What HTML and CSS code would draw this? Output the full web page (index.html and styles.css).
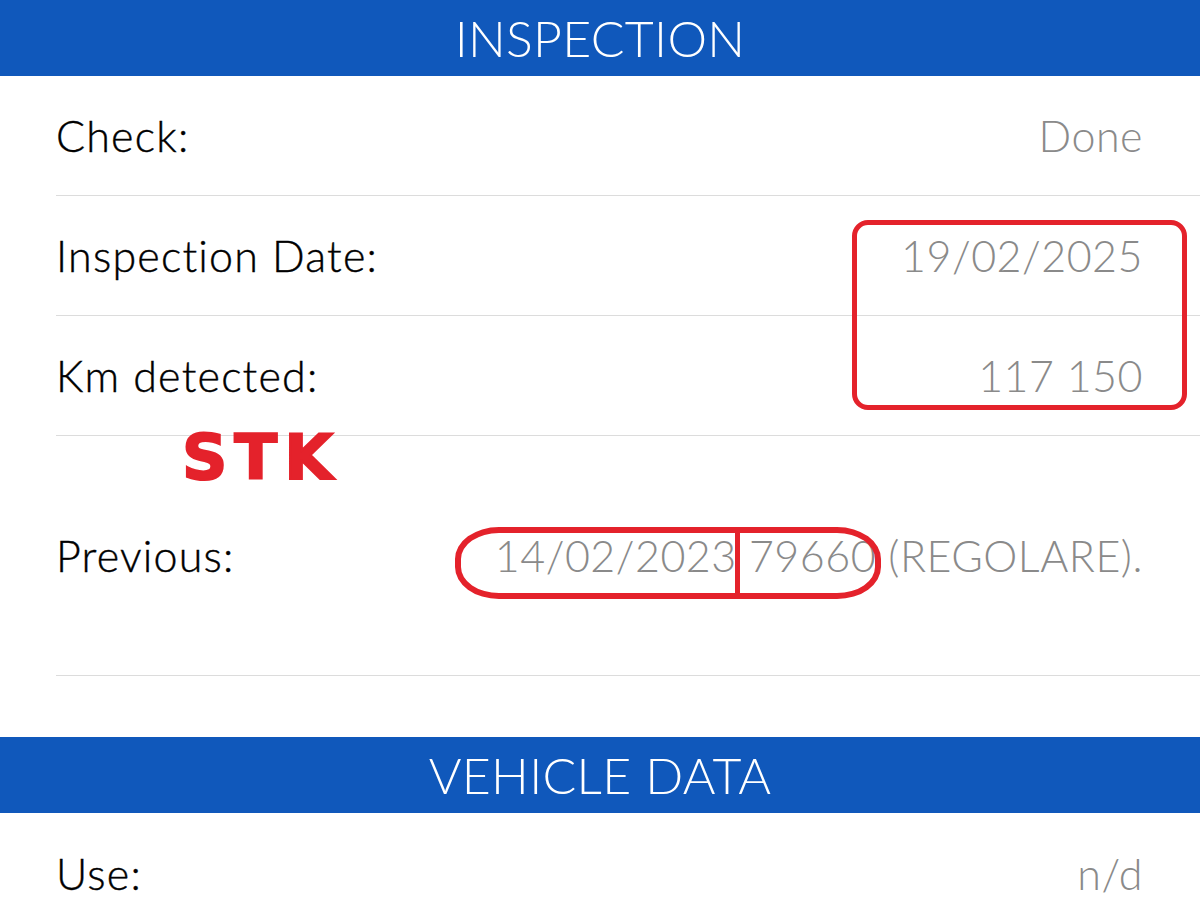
FILE: index.html
```html
<!DOCTYPE html>
<html>
<head>
<meta charset="utf-8">
<link rel="stylesheet" href="styles.css">
</head>
<body>
<div class="page">
  <div class="section-head">INSPECTION</div>
  <div class="list">
    <div class="row"><span class="label">Check:</span><span class="value">Done</span></div>
    <div class="row"><span class="label">Inspection Date:</span><span class="value">19/02/2025</span></div>
    <div class="row"><span class="label">Km detected:</span><span class="value">117 150</span></div>
    <div class="row tall"><span class="label">Previous:</span><span class="value">14/02/2023 79660 (REGOLARE).</span></div>
  </div>
  <div class="spacer"></div>
  <div class="section-head">VEHICLE DATA</div>
  <div class="list">
    <div class="row last"><span class="label">Use:</span><span class="value">n/d</span></div>
  </div>

  <div class="mark box-main"></div>
  <div class="mark box-prev"></div>
  <div class="mark box-divider"></div>
  <div class="stk">STK</div>
</div>
</body>
</html>
```
FILE: styles.css
```css
html, body {
  margin: 0;
  padding: 0;
  background: #ffffff;
}
.page {
  position: relative;
  width: 1200px;
  height: 900px;
  overflow: hidden;
  font-family: "Lato", "Open Sans", sans-serif;
}
.section-head {
  height: 76px;
  background: #1058bb;
  color: #ffffff;
  font-size: 50px;
  font-weight: 300;
  letter-spacing: 0.3px;
  display: flex;
  align-items: center;
  justify-content: center;
}
.list {
  padding-left: 56px;
}
.row {
  height: 120px;
  display: flex;
  align-items: center;
  justify-content: space-between;
  padding-right: 57px;
  border-bottom: 1px solid #dcdcdc;
  box-sizing: border-box;
}
.row.tall {
  height: 240px;
}
.row.last {
  border-bottom: none;
}
.label {
  font-size: 43px;
  font-weight: 300;
  letter-spacing: 1.2px;
  color: #000000;
  -webkit-text-stroke: 0.4px #000000;
}
.value {
  font-size: 43px;
  font-weight: 300;
  letter-spacing: 0.5px;
  color: #8a8a8a;
}
.spacer {
  height: 61px;
}
.mark {
  position: absolute;
  border: 5px solid #e4222b;
  box-sizing: border-box;
}
.box-main {
  left: 852px;
  top: 220px;
  width: 335px;
  height: 190px;
  border-radius: 16px;
}
.box-prev {
  left: 455px;
  top: 527px;
  width: 426px;
  height: 72px;
  border-width: 6px;
  border-radius: 44px / 32px;
}
.box-divider {
  left: 735px;
  top: 529px;
  width: 5px;
  height: 68px;
  border: none;
  background: #e4222b;
}
.stk {
  position: absolute;
  left: 182px;
  top: 426px;
  font-family: "DejaVu Sans", "Liberation Sans", sans-serif;
  font-weight: 700;
  font-size: 63px;
  letter-spacing: 7px;
  color: #e4222b;
  -webkit-text-stroke: 2px #e4222b;
  line-height: 1;
}
```
